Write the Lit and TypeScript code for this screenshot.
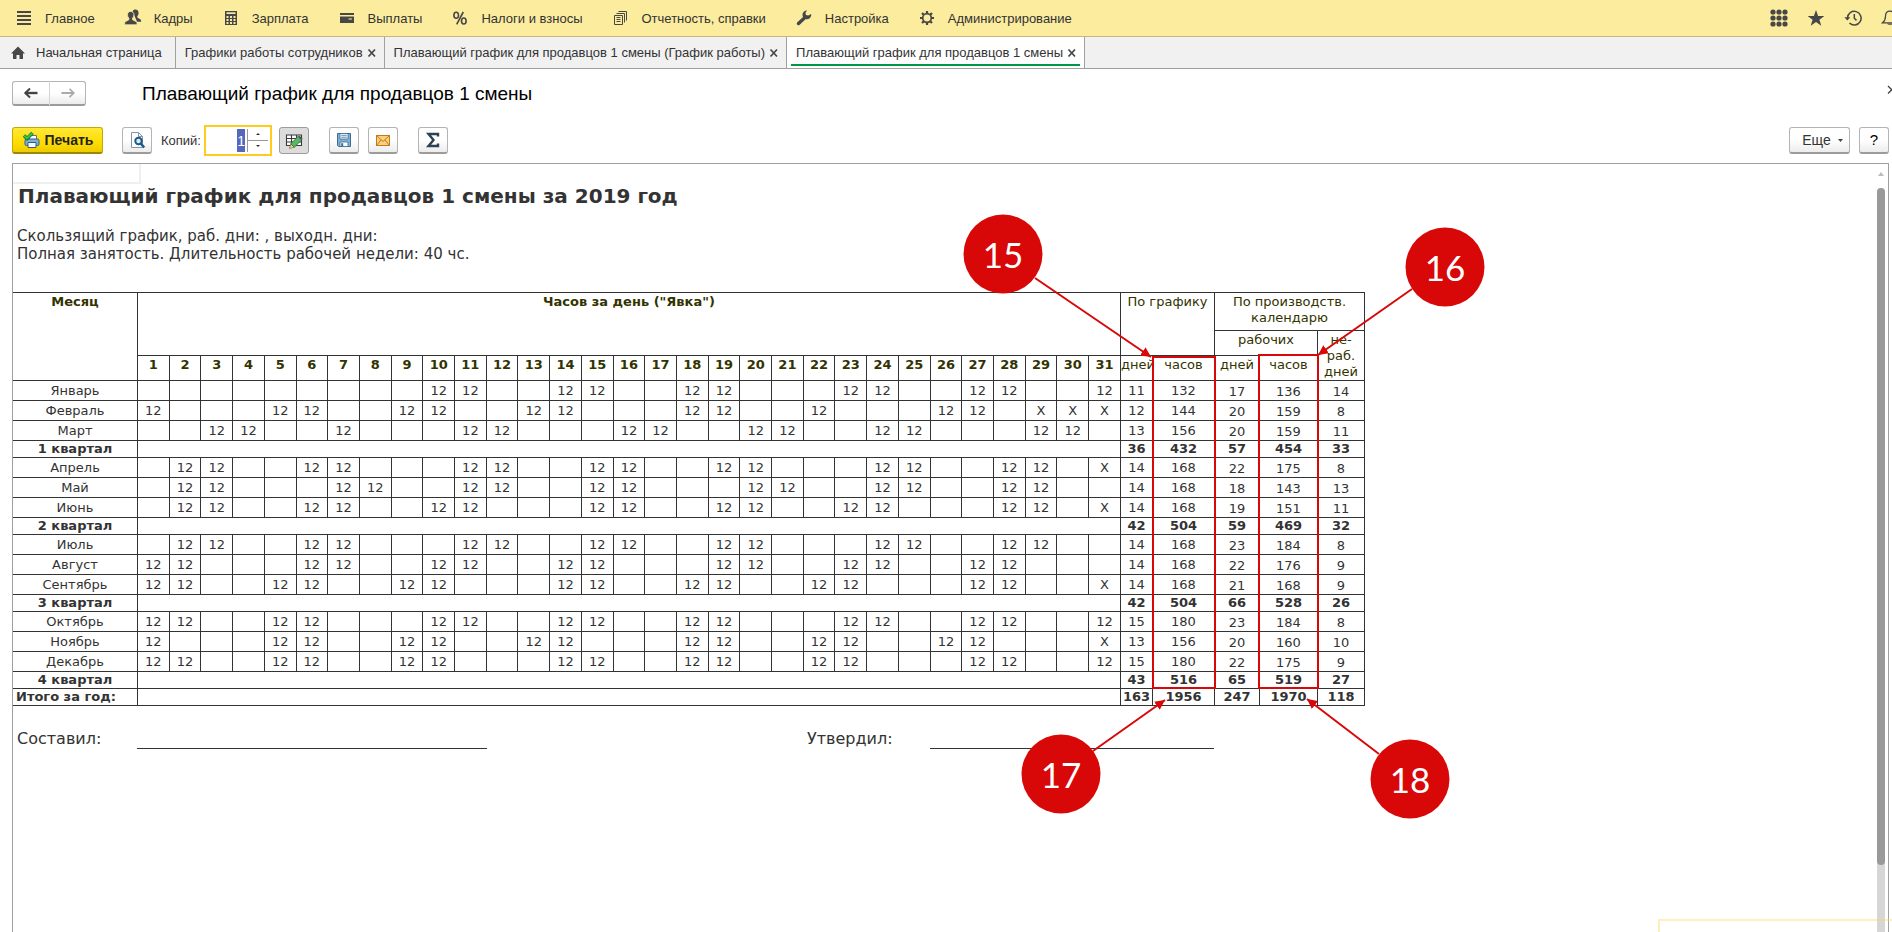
import { LitElement, html, svg, css } from "lit";
import { customElement, state } from "lit/decorators.js";
import { classMap } from "lit/directives/class-map.js";

const ico = (size: number, body: unknown) =>
  html`<svg class="ico" width=${size} height=${size} viewBox="0 0 ${size} ${size}" aria-hidden="true">${body}</svg>`;

const INK = "#474747";

const icons = {
  menu: ico(18, svg`<path d="M2 3h14M2 7h14M2 11h14M2 15h14" stroke=${INK} stroke-width="2" />`),
  people: ico(18, svg`<g fill=${INK}><path d="M8.500 2.200c.6-1.200 1.700-1.700 2.900-1.700 2 0 3.200 1.300 3.200 3.300 0 1.500-.5 2.700-1.300 3.400v1.300l3.200 1.900c.4.300.6.700.6 1.300v1.100h-4z"/><path d="M6.700 2.400c2 0 3.200 1.400 3.200 3.400 0 1.500-.6 2.700-1.400 3.400v1.500l3.700 1.900c.5.3.8 1 .8 1.800v1.400H.7v-1.400c0-.8.3-1.500.8-1.800l3.400-1.900V9.200C4 8.500 3.500 7.300 3.500 5.800c0-2 1.200-3.400 3.200-3.400z" stroke="#fbec9e" stroke-width=".8"/></g>`),
  calc: ico(18, svg`<path d="M3 2h12v14H3z" fill=${INK}/><path d="M4.500 3.300h9v1.700h-9z" fill="#fbec9e"/><path d="M4.500 7h2v2h-2zM8 7h2v2H8zM11.500 7h2v2h-2zM4.500 10h2v2h-2zM8 10h2v2H8zM11.500 10h2v2h-2zM4.500 13h2v2h-2zM8 13h2v2H8zM11.500 13h2v2h-2z" fill="#fbec9e"/>`),
  card: ico(18, svg`<path d="M2 4h14v2H2zM2 7.500h14V14H2z" fill=${INK}/><path d="M10.500 9.500h3.500v1h-3.500z" fill="#fbec9e"/>`),
  percent: ico(18, svg`<g fill="none" stroke=${INK} stroke-width="1.600"><ellipse cx="5.200" cy="6.200" rx="2.300" ry="3"/><ellipse cx="12.800" cy="12" rx="2.300" ry="3"/><path d="M12.300 3L5.700 15.300"/></g>`),
  docs: ico(18, svg`<g fill="none" stroke=${INK} stroke-width="1"><path d="M2.500 6.500h8v9h-8zM4.500 4.500h8v9M6.500 2.500h8v9M4.500 8.500h4M4.500 10.500h4M4.500 12.500h4"/></g>`),
  wrench: ico(18, svg`<path d="M3.500 14.500L10 8.500" stroke=${INK} stroke-width="3.400" stroke-linecap="round"/><path d="M16.200 5a4.400 4.400 0 1 1-4.200-3.600l-1.500 2.300.4 2.300 2.400.6z" fill=${INK}/>`),
  gear: ico(18, svg`<circle cx="9" cy="9" r="4.300" fill="none" stroke=${INK} stroke-width="1.700"/><path d="M9 2v2.500M9 13.500V16M2 9h2.500M13.500 9H16M4 4l1.800 1.800M12.200 12.200L14 14M14 4l-1.800 1.800M5.800 12.200L4 14" stroke=${INK} stroke-width="2.200"/>`),
  apps: ico(18, svg`<g fill=${INK}>${[3, 9, 15].map((x) => [3, 9, 15].map((y) => svg`<circle cx=${x} cy=${y} r="2.600"/>`))}</g>`),
  star: ico(18, svg`<path d="M9 1l2.100 5.900h6.300l-5 3.800 1.900 6-5.300-3.600-5.300 3.600 1.900-6-5-3.800h6.300z" fill=${INK}/>`),
  history: ico(18, svg`<g fill="none" stroke=${INK} stroke-width="1.500"><path d="M3.500 9a6.800 6.800 0 1 1 2 5"/><path d="M10.300 5v4.200l2.200 2.200"/></g><path d="M.3 8.300h6l-3 3.200z" fill=${INK}/>`),
  bell: ico(18, svg`<path d="M9 2.200c3 0 4.500 2 4.500 5 0 3.500 1 5 3 6.600h-15c2-1.600 3-3.100 3-6.600 0-3 1.500-5 4.500-5z" fill="none" stroke=${INK} stroke-width="1.300"/><path d="M6 14.500h6c-.5 1.700-5.500 1.700-6 0z" fill=${INK}/>`),
  home: ico(16, svg`<path d="M8 1.500L1 8.500h2V14h3.500v-4h3v4H13V8.500h2z" fill=${INK}/>`),
  close: ico(10, svg`<path d="M1.500 1.500l6.500 7M8 1.500l-6.500 7" stroke="#444" stroke-width="1.700"/>`),
  closeThin: ico(10, svg`<path d="M1 1l7.500 7.500M8.500 1L1 8.500" stroke="#444" stroke-width="1.300"/>`),
  back: ico(16, svg`<path d="M2 8h12.500" stroke="#444" stroke-width="2.400"/><path d="M7 3.500L2.300 8 7 12.500" stroke="#444" stroke-width="2" fill="none"/>`),
  forward: ico(16, svg`<path d="M1.500 8h12" stroke="#aaa" stroke-width="2"/><path d="M9.500 3.800l4.300 4.200-4.300 4.200" stroke="#aaa" stroke-width="1.700" fill="none"/>`),
  print: ico(18, svg`<path d="M7.500 4.500h7v4h-7z" fill="#fff" stroke="#4a7899"/><rect x="3" y="8" width="14" height="6.500" rx="1.500" fill="#7fb0d2" stroke="#2f5f86"/><path d="M6 11.500h8v5H6z" fill="#fff" stroke="#2f5f86"/><path d="M2 4.500l3 3L10.500 2" fill="none" stroke="#15712a" stroke-width="3.400"/><path d="M2.300 4.800L5 7.300l5.200-5" fill="none" stroke="#3cc24e" stroke-width="1.900"/>`),
  preview: ico(18, svg`<path d="M3.500 1.500h7l4 4v11h-11z" fill="#fff" stroke="#8794a0"/><path d="M10.500 1.500v4h4" fill="none" stroke="#8794a0"/><circle cx="10.500" cy="10" r="3.200" fill="#dcebf6" stroke="#1b5a8c" stroke-width="2"/><path d="M12.700 12.500l3.500 4" stroke="#1b5a8c" stroke-width="2.600"/>`),
  sheetEdit: ico(18, svg`<path d="M1.500 3h15v10.500h-15z" fill="#fff"/><path d="M1.500 3h15v10.500h-15zM1.500 6.500h15M1.500 10h15M6.500 3v10.500M11.500 3v10.500" fill="none" stroke="#3a3a3a" stroke-width="1.100"/><path d="M4.500 16.500l1.300-4.800 3.500 3.500z" fill="#f3cf9a" stroke="#8a6a3a" stroke-width=".7"/><path d="M5.800 11.700L13 4.500l3.500 3.500-7.200 7.200z" fill="#57b868" stroke="#2c7a3b" stroke-width=".9"/><path d="M13 4.500l1.200-1.200 3.500 3.500-1.200 1.200z" fill="#555"/>`),
  save: ico(18, svg`<path d="M2.500 2.500h13v13h-12l-1-1z" fill="#7fb0d8" stroke="#3c6c95"/><path d="M5 2.500h8v5.500H5zM5 11h8v4.500H5z" fill="#fff" stroke="#3c6c95" stroke-width=".8"/><path d="M6.200 4.300h5.600M6.200 6.200h5.600" stroke="#3c6c95" stroke-width=".8"/><path d="M6.200 12.200h2v3.300h-2z" fill="#3c6c95"/>`),
  mail: ico(18, svg`<rect x="2.500" y="4.500" width="13" height="10" fill="#fbcf7d" stroke="#c27a1a"/><path d="M2.500 4.500L9 10.500l6.500-6M2.500 14.500L7 9M15.500 14.500L11 9" fill="none" stroke="#c27a1a"/>`),
  sum: ico(18, svg`<path d="M14 5.500V3H4.500L9.500 9l-5 6H14v-2.500" fill="none" stroke="#2c4256" stroke-width="2.400"/>`),
};

const sections: [unknown, string][] = [
  [icons.menu, "Главное"],
  [icons.people, "Кадры"],
  [icons.calc, "Зарплата"],
  [icons.card, "Выплаты"],
  [icons.percent, "Налоги и взносы"],
  [icons.docs, "Отчетность, справки"],
  [icons.wrench, "Настройка"],
  [icons.gear, "Администрирование"],
];

const services: [unknown, string][] = [
  [icons.apps, "Все функции"],
  [icons.star, "Избранное"],
  [icons.history, "История"],
  [icons.bell, "Оповещения"],
];

const tabs = [
  "Графики работы сотрудников",
  "Плавающий график для продавцов 1 смены (График работы)",
  "Плавающий график для продавцов 1 смены",
];

interface Row {
  name: string;
  kind: "month" | "quarter" | "year";
  work?: number[];
  absent?: number[];
  totals: number[];
}

const month = (name: string, work: number[], absent: number[], totals: number[]): Row => ({ name, kind: "month", work, absent, totals });
const quarter = (name: string, totals: number[]): Row => ({ name, kind: "quarter", totals });

const rows: Row[] = [
  month("Январь", [10, 11, 14, 15, 18, 19, 23, 24, 27, 28, 31], [], [11, 132, 17, 136, 14]),
  month("Февраль", [1, 5, 6, 9, 10, 13, 14, 18, 19, 22, 26, 27], [29, 30, 31], [12, 144, 20, 159, 8]),
  month("Март", [3, 4, 7, 11, 12, 16, 17, 20, 21, 24, 25, 29, 30], [], [13, 156, 20, 159, 11]),
  quarter("1 квартал", [36, 432, 57, 454, 33]),
  month("Апрель", [2, 3, 6, 7, 11, 12, 15, 16, 19, 20, 24, 25, 28, 29], [31], [14, 168, 22, 175, 8]),
  month("Май", [2, 3, 7, 8, 11, 12, 15, 16, 20, 21, 24, 25, 28, 29], [], [14, 168, 18, 143, 13]),
  month("Июнь", [2, 3, 6, 7, 10, 11, 15, 16, 19, 20, 23, 24, 28, 29], [31], [14, 168, 19, 151, 11]),
  quarter("2 квартал", [42, 504, 59, 469, 32]),
  month("Июль", [2, 3, 6, 7, 11, 12, 15, 16, 19, 20, 24, 25, 28, 29], [], [14, 168, 23, 184, 8]),
  month("Август", [1, 2, 6, 7, 10, 11, 14, 15, 19, 20, 23, 24, 27, 28], [], [14, 168, 22, 176, 9]),
  month("Сентябрь", [1, 2, 5, 6, 9, 10, 14, 15, 18, 19, 22, 23, 27, 28], [31], [14, 168, 21, 168, 9]),
  quarter("3 квартал", [42, 504, 66, 528, 26]),
  month("Октябрь", [1, 2, 5, 6, 10, 11, 14, 15, 18, 19, 23, 24, 27, 28, 31], [], [15, 180, 23, 184, 8]),
  month("Ноябрь", [1, 5, 6, 9, 10, 13, 14, 18, 19, 22, 23, 26, 27], [31], [13, 156, 20, 160, 10]),
  month("Декабрь", [1, 2, 5, 6, 9, 10, 14, 15, 18, 19, 22, 23, 27, 28, 31], [], [15, 180, 22, 175, 9]),
  quarter("4 квартал", [43, 516, 65, 519, 27]),
  { name: "Итого за год:", kind: "year", totals: [163, 1956, 247, 1970, 118] },
];

const days = Array.from({ length: 31 }, (_, i) => i + 1);

@customElement("schedule-table")
class ScheduleTable extends LitElement {
  static styles = css`
    :host { display: block; color: #333; font: 13px/16px "DejaVu Sans", Verdana, sans-serif; }
    .grid { width: 1352px; table-layout: fixed; border-collapse: separate; border-spacing: 0; border-top: 1px solid #333; }
    .c-name { width: 125px; }
    .c-days { width: 32px; }
    .c-hours { width: 62px; }
    .c-wdays { width: 45px; }
    .c-whours { width: 58px; }
    .c-off { width: 47px; }
    th, td { box-sizing: border-box; padding: 0; border-right: 1px solid #333; border-bottom: 1px solid #333; text-align: center; vertical-align: middle; font-weight: 400; white-space: nowrap; }
    .top { height: 38px; }
    .sub { height: 25px; }
    thead th { color: #330; vertical-align: top; padding-top: 1px; }
    thead .strong { font-weight: 700; }
    .month { height: 20px; }
    .month .low { vertical-align: bottom; }
    .quarter, .year { height: 17px; }
    .quarter th, .quarter td, .year th, .year td { font-weight: 700; }
    .year th { text-align: left; padding-left: 3px; }
  `;

  private dayCell(r: Row, d: number) {
    return html`<td>${r.work!.includes(d) ? "12" : r.absent!.includes(d) ? "X" : ""}</td>`;
  }

  render() {
    return html`<table class="grid">
      <colgroup>
        <col class="c-name" />${days.map(() => html`<col />`)}
        <col class="c-days" /><col class="c-hours" /><col class="c-wdays" /><col class="c-whours" /><col class="c-off" />
      </colgroup>
      <thead>
        <tr class="top">
          <th class="strong" rowspan="3" scope="col">Месяц</th>
          <th class="strong" colspan="31" rowspan="2">Часов за день ("Явка")</th>
          <th colspan="2" rowspan="2">По графику</th>
          <th colspan="3">По производств.<br />календарю</th>
        </tr>
        <tr class="sub">
          <th colspan="2">рабочих</th>
          <th rowspan="2" scope="col">не-<br />раб.<br />дней</th>
        </tr>
        <tr class="sub">
          ${days.map((d) => html`<th class="strong" scope="col">${d}</th>`)}
          <th scope="col">дней</th><th scope="col">часов</th><th scope="col">дней</th><th scope="col">часов</th>
        </tr>
      </thead>
      <tbody>
        ${rows.map((r) => html`<tr class=${r.kind}>
          <th scope="row">${r.name}</th>
          ${r.kind === "month" ? days.map((d) => this.dayCell(r, d)) : html`<td colspan="31"></td>`}
          ${r.totals.map((v, i) => html`<td class=${classMap({ low: i > 1 })}>${v}</td>`)}
        </tr>`)}
      </tbody>
    </table>`;
  }
}

@customElement("callout-layer")
class CalloutLayer extends LitElement {
  static styles = css`
    :host { display: block; pointer-events: none; }
    .layer { display: block; overflow: visible; }
    .num { font: 35px Lato, sans-serif; fill: #fff; text-anchor: middle; }
  `;

  render() {
    const marks = [
      { n: 15, x: 990, y: 90, fx: 1022, fy: 114, tx: 1138, ty: 193 },
      { n: 16, x: 1432, y: 103, fx: 1399, fy: 125, tx: 1305, ty: 191 },
      { n: 17, x: 1048, y: 610, fx: 1080, fy: 587, tx: 1152, ty: 536 },
      { n: 18, x: 1397, y: 615, fx: 1366, fy: 590, tx: 1294, ty: 535 },
    ];
    return html`<svg class="layer" width="1500" height="680" viewBox="0 0 1500 680">
      <defs>
        <marker id="tip" markerUnits="userSpaceOnUse" markerWidth="12" markerHeight="12" refX="10" refY="5" orient="auto"><path d="M0 0L10 5L0 10z" fill="#d80808" /></marker>
      </defs>
      <g fill="none" stroke="#d80808" stroke-width="2">
        <rect x="1140" y="193" width="62" height="331" />
        <rect x="1246" y="191" width="59" height="333" />
        ${marks.map((m) => svg`<line x1=${m.fx} y1=${m.fy} x2=${m.tx} y2=${m.ty} marker-end="url(#tip)"/>`)}
      </g>
      ${marks.map((m) => svg`<circle cx=${m.x} cy=${m.y} r="39.500" fill="#d80808"/><text class="num" x=${m.x} y=${m.y + 14}>${m.n}</text>`)}
    </svg>`;
  }
}

@customElement("app-root")
class AppRoot extends LitElement {
  static styles = css`
    :host { display: block; font: 13px/16px "Liberation Sans", Arial, sans-serif; color: #333; }
    .page { position: relative; display: flex; flex-direction: column; height: 100vh; overflow: hidden; background: #fff; }
    .ico { display: block; flex: none; }
    button { font: inherit; color: inherit; cursor: pointer; }
    .nav { display: flex; align-items: center; box-sizing: border-box; height: 37px; padding: 0 0 0 15px; background: #fbec9e; border-bottom: 1px solid #c4b878; flex: none; }
    .sections { display: flex; gap: 29px; flex: 1; }
    .section { display: flex; align-items: center; gap: 12px; color: #333; text-decoration: none; white-space: nowrap; }
    .caption { padding-top: 2px; }
    .services { display: flex; gap: 19px; margin-right: -7px; }
    .plain { border: 0; background: none; padding: 0; display: block; }
    .tabs { display: flex; box-sizing: border-box; height: 32px; background: #f1f1f1; border-bottom: 1px solid #a0a0a0; flex: none; }
    .tab { display: flex; align-items: center; gap: 4px; padding: 0 7px 0 9px; border-right: 1px solid #a0a0a0; white-space: nowrap; }
    .tab.start { gap: 10px; padding: 0 13px 0 10px; }
    .tab.on { background: linear-gradient(#009846, #009846) 50% calc(100% - 2px) / calc(100% - 8px) 2px no-repeat #fff; }
    .head { display: flex; align-items: center; padding: 12px 0 0 12px; flex: none; }
    .hist { display: flex; }
    .btn { display: flex; align-items: center; justify-content: center; box-sizing: border-box; height: 27px; padding: 0; border: 1px solid #b4b4b4; border-bottom: 2px solid #9c9c9c; border-radius: 3px; background: linear-gradient(#fff 50%, #ececec); }
    .hist .btn { width: 37px; height: 25px; }
    .hist .btn:first-child { border-radius: 3px 0 0 3px; border-right-width: 0; }
    .hist .btn:last-child { border-radius: 0 3px 3px 0; border-left-color: #d4d4d4; }
    .title { flex: 1; margin: 0 0 0 56px; padding-top: 1px; font: 19px/24px "Liberation Sans", Arial, sans-serif; color: #000; }
    .shut { align-self: flex-start; margin-right: -5px; padding-top: 4px; }
    .bar { display: flex; align-items: center; padding: 19px 3px 7px 12px; flex: none; }
    .icon-btn { width: 30px; }
    .main { width: 91px; gap: 5px; font-size: 14px; font-weight: 700; color: #222; border-color: #c8a800 #c8a800 #9e8600; background: linear-gradient(#ffe838, #ffdc00 60%, #eccc00); }
    .preview { margin-left: 19px; }
    .copies { margin: 0 3px 0 9px; }
    .spin { display: flex; box-sizing: border-box; width: 68px; height: 31px; border: 2px solid #ffcb1f; background: #fff; padding: 2px 0; }
    .field { width: 0; flex: 1; border: 0; outline: 0; padding: 0 2px 0 0; text-align: right; font: 14px/24px "Liberation Sans", Arial, sans-serif; color: #333; background: none; }
    .field::selection { background: #5468bd; color: #fff; }
    .steps { width: 20px; display: grid; grid-template-rows: 1fr 1fr; margin-right: 2px; border-left: 1px solid #999; }
    .step { display: flex; align-items: center; justify-content: center; border: 0; background: none; padding: 0; }
    .step:first-child { border-bottom: 1px solid #999; }
    .edit { margin-left: 7px; background: #dcdcdc; border: 1px solid #9c9c9c; }
    .save { margin-left: 20px; }
    .mail { margin-left: 9px; }
    .sum { margin-left: 20px; }
    .more { margin-left: auto; width: 61px; gap: 7px; padding-left: 6px; font-size: 14px; }
    .help { margin-left: 9px; font-size: 15px; color: #000; }
    .frame { display: flex; flex: 1; min-height: 0; margin: 0 3px 0 12px; border: solid #a0a0a0; border-width: 1px 1px 0; }
    .doc { position: relative; flex: 1; min-width: 0; overflow: hidden; font-family: "DejaVu Sans", Verdana, sans-serif; }
    .cursor { width: 126px; height: 18px; border: solid #efefef; border-width: 0 2px 2px 0; }
    .h { margin: 0; padding: 0 4px 0 5px; font-size: 20px; line-height: 24px; color: #333; }
    .info { margin: 19px 4px 29px 4px; font-size: 15px; line-height: 18px; }
    .signs { display: grid; grid-template-columns: 124px 350px 320px 123px 284px; margin-top: 23px; font-size: 16px; line-height: 20px; }
    .who { padding-left: 4px; }
    .line { border-bottom: 1px solid #333; }
    .callouts { position: absolute; left: 0; top: 0; }
    .scroll { display: flex; flex-direction: column; align-items: center; width: 14px; flex: none; }
    .up { padding: 8px 0 12px; }
    .track { flex: 1; width: 8px; background: #d6d6d6; border-radius: 4px 4px 0 0; }
    .thumb { height: 677px; border-radius: 4px; background: #999; }
    .toast { position: absolute; right: 0; bottom: 0; width: 232px; height: 11px; border: solid rgba(255, 218, 80, .4); border-width: 2px 0 0 2px; }
  `;

  @state() private active = 2;

  firstUpdated() {
    const f = this.renderRoot.querySelector<HTMLInputElement>(".field")!;
    f.focus();
    f.select();
  }

  render() {
    return html`<div class="page">
      <header class="nav">
        <nav class="sections">${sections.map(([i, t]) => html`<a class="section" href="#">${i}<span class="caption">${t}</span></a>`)}</nav>
        <div class="services">${services.map(([i, t]) => html`<button class="plain" aria-label=${t}>${i}</button>`)}</div>
      </header>
      <div class="tabs">
        <div class="tab start">${icons.home}<button class="plain">Начальная страница</button></div>
        ${tabs.map((t, i) => html`<div class=${classMap({ tab: true, on: i === this.active })}>
          <button class="plain" @click=${() => (this.active = i)}>${t}</button>
          <button class="plain" aria-label="Закрыть">${icons.close}</button>
        </div>`)}
      </div>
      <div class="head">
        <div class="hist"><button class="btn" aria-label="Назад">${icons.back}</button><button class="btn" aria-label="Вперед">${icons.forward}</button></div>
        <h1 class="title">Плавающий график для продавцов 1 смены</h1>
        <button class="plain shut" aria-label="Закрыть">${icons.closeThin}</button>
      </div>
      <div class="bar">
        <button class="btn main">${icons.print}Печать</button>
        <button class="btn icon-btn preview" aria-label="Просмотр">${icons.preview}</button>
        <label class="copies" for="copies">Копий:</label>
        <div class="spin">
          <input class="field" id="copies" type="text" inputmode="numeric" value="1" />
          <div class="steps">
            <button class="step" aria-label="Больше"><svg class="ico" width="4" height="2"><path d="M0 2L2 0L4 2z" fill="#333" /></svg></button>
            <button class="step" aria-label="Меньше"><svg class="ico" width="4" height="2"><path d="M0 0h4L2 2z" fill="#333" /></svg></button>
          </div>
        </div>
        <button class="btn icon-btn edit" aria-label="Редактирование">${icons.sheetEdit}</button>
        <button class="btn icon-btn save" aria-label="Сохранить">${icons.save}</button>
        <button class="btn icon-btn mail" aria-label="Отправить">${icons.mail}</button>
        <button class="btn icon-btn sum" aria-label="Сумма">${icons.sum}</button>
        <button class="btn more">Еще<svg class="ico" width="5" height="3"><path d="M0 0h5L2.500 3z" fill="#444" /></svg></button>
        <button class="btn icon-btn help">?</button>
      </div>
      <div class="frame">
        <div class="doc">
          <div class="cursor"></div>
          <h2 class="h">Плавающий график для продавцов 1 смены за 2019 год</h2>
          <div class="info">Скользящий график, раб. дни: , выходн. дни:<br />Полная занятость. Длительность рабочей недели: 40 чс.</div>
          <schedule-table></schedule-table>
          <div class="signs">
            <span class="who">Составил:</span><span class="line"></span><span></span><span>Утвердил:</span><span class="line"></span>
          </div>
          <callout-layer class="callouts"></callout-layer>
        </div>
        <div class="scroll">
          <svg class="ico up" width="6" height="4"><path d="M0 4L3 0L6 4z" fill="#bbb" /></svg>
          <div class="track"><div class="thumb"></div></div>
        </div>
      </div>
      <div class="toast"></div>
    </div>`;
  }
}
